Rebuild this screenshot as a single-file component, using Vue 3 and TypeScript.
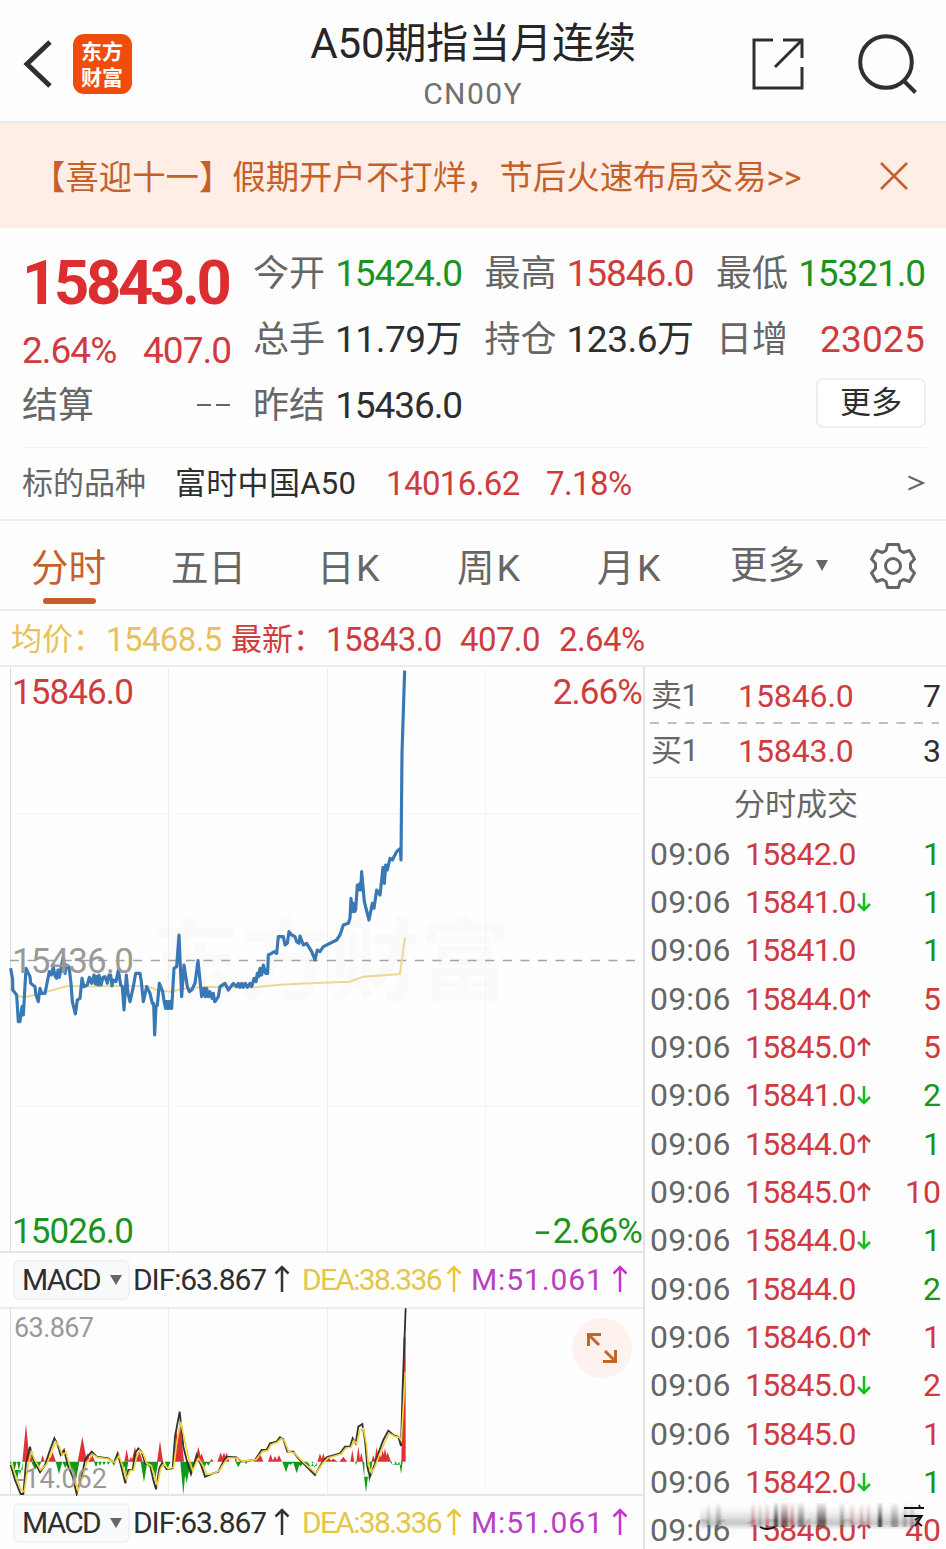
<script setup lang="ts">
type Tone = 'up' | 'down' | 'plain'

interface Cell { label: string; value: string; tone: Tone; fit?: string }
interface Tick { price: string; dir: '' | 'up' | 'down'; qty: number; tone: Tone }

const cells: Cell[] = [
  { label: '今开', value: '15424.0', tone: 'down' },
  { label: '最高', value: '15846.0', tone: 'up' },
  { label: '最低', value: '15321.0', tone: 'down' },
  { label: '总手', value: '11.79万', tone: 'plain', fit: 'loose' },
  { label: '持仓', value: '123.6万', tone: 'plain', fit: 'loose' },
  { label: '日增', value: '23025', tone: 'up', fit: 'looser' },
  { label: '昨结', value: '15436.0', tone: 'plain' },
]

const tabs = ['分时', '五日', '日K', '周K', '月K']

const t = (price: string, dir: Tick['dir'], qty: number, tone: Tone): Tick => ({ price, dir, qty, tone })
const ticks: Tick[] = [
  t('15842.0', '', 1, 'down'),
  t('15841.0', 'down', 1, 'down'),
  t('15841.0', '', 1, 'down'),
  t('15844.0', 'up', 5, 'up'),
  t('15845.0', 'up', 5, 'up'),
  t('15841.0', 'down', 2, 'down'),
  t('15844.0', 'up', 1, 'down'),
  t('15845.0', 'up', 10, 'up'),
  t('15844.0', 'down', 1, 'down'),
  t('15844.0', '', 2, 'down'),
  t('15846.0', 'up', 1, 'up'),
  t('15845.0', 'down', 2, 'up'),
  t('15845.0', '', 1, 'up'),
  t('15842.0', 'down', 1, 'down'),
  t('15846.0', 'up', 40, 'up'),
]

// Series are stored at three units per pixel.
const price =
  '32,385 38,420 38,450 50,465 55,545 60,545 66,500 70,525 78,385 90,410 92,430 105,440 108,465 115,485 120,445 125,460 135,460 142,425 148,395 154,405 160,380 165,408 170,415 174,390 178,412 184,380 190,350 195,400 200,375 207,380 213,430 217,485 226,522 232,480 240,475 246,415 252,440 262,435 268,412 275,430 282,405 286,432 290,410 294,435 297,405 303,435 309,412 315,410 322,430 327,405 332,405 336,438 340,420 348,425 355,390 362,435 367,440 372,510 379,405 384,460 390,485 400,440 407,400 420,400 424,425 430,485 440,440 450,460 457,490 461,490 464,585 468,500 472,495 478,430 488,455 492,482 497,505 500,485 503,505 506,485 509,505 512,485 515,505 522,385 530,380 537,285 545,470 552,375 562,440 568,455 575,450 585,430 594,362 605,470 612,445 616,470 620,445 625,470 630,455 636,475 640,460 644,485 ' +
  '607,470 612,450 617,480 622,460 626,475 630,445 645,485 655,470 660,440 675,430 685,450 700,430 710,440 715,430 720,442 725,430 730,442 736,430 742,442 750,430 755,440 758,430 762,415 768,425 772,400 776,410 780,385 785,405 790,375 797,400 803,400 805,345 815,340 822,335 830,340 835,290 850,290 855,315 862,310 867,275 875,285 885,290 890,305 897,310 900,288 910,315 920,310 935,335 945,360 952,330 960,335 970,320 1010,300 1020,285 1030,255 1045,250 1050,235 1053,175 1057,215 1060,190 1063,215 1067,210 1072,135 1076,150 1080,130 1082,150 1085,95 1093,185 1107,240 1117,190 1122,205 1130,150 1140,165 1149,82 1153,130 1157,75 1162,90 1170,55 1177,60 1190,35 1201,25 1203,60 1206,-260 1214,-508'
    .replace('607,470 612,450 617,480 622,460 626,475 630,445 ', '')

const average =
  '32,420 50,468 75,472 130,458 205,437 250,440 320,438 440,438 470,450 510,455 560,445 620,440 765,442 840,434 930,430 1050,425 1090,410 1200,402 1215,292'

const dif =
  '32,735 45,780 62,822 70,822 78,730 90,680 100,720 120,757 135,735 150,690 163,655 172,672 182,705 192,690 205,740 218,770 230,822 245,770 255,720 275,695 290,710 305,712 325,715 342,728 353,700 365,745 376,790 385,750 398,750 405,700 415,685 425,695 435,730 450,735 460,780 468,808 478,745 487,728 500,748 518,745 525,650 539,575 550,680 560,720 573,762 590,705 605,740 615,770 640,760 655,755 670,725 680,710 710,712 725,725 765,720 785,690 800,690 810,670 830,665 840,652 850,658 862,695 880,695 895,715 915,735 945,765 965,730 980,712 1020,700 1035,680 1050,680 1058,655 1067,670 1075,620 1087,612 1095,660 1102,740 1110,770 1120,745 1135,700 1150,660 1165,632 1180,645 1195,650 1203,678 1208,500 1217,265'
const dea =
  '34,730 48,770 64,812 73,815 84,735 94,695 104,720 122,750 140,733 154,697 166,665 177,678 187,705 198,697 210,740 223,768 234,812 248,772 260,728 278,703 292,712 325,717 344,728 357,707 370,745 379,778 390,752 401,750 410,710 419,691 429,700 440,730 454,737 464,772 472,795 482,745 491,732 504,746 521,742 530,670 542,605 556,670 566,715 578,752 595,715 610,738 620,764 642,760 658,752 674,727 684,714 712,714 728,724 768,719 788,694 803,692 813,674 832,667 843,656 853,662 866,695 883,699 899,716 919,735 948,760 968,730 984,714 1023,702 1038,684 1053,682 1062,662 1070,672 1079,632 1090,625 1099,670 1105,735 1114,758 1124,742 1139,702 1154,667 1168,640 1183,649 1198,652 1204,662 1210,560 1216,455'

type Spike = [x: number, half: number, y: number]
const rise: Spike[] = [
  [78, 11, 612], [88, 10, 680], [128, 6, 705], [146, 10, 700], [158, 10, 697], [247, 14, 650], [262, 10, 700], [275, 10, 700],
  [380, 7, 688], [393, 7, 710], [405, 10, 680], [418, 10, 692], [480, 9, 662], [530, 10, 630], [539, 13, 600], [595, 11, 680],
  [605, 8, 700], [635, 6, 716], [662, 10, 697], [672, 10, 697], [680, 8, 697], [707, 3, 705], [770, 9, 712], [780, 10, 700],
  [812, 8, 702], [825, 8, 708], [837, 9, 705], [960, 8, 700], [970, 8, 700], [985, 8, 704], [1000, 14, 716], [1030, 12, 710],
  [1057, 6, 690], [1075, 6, 678], [1084, 6, 697], [1120, 6, 705], [1130, 7, 680], [1138, 8, 695], [1148, 8, 690], [1155, 8, 684],
  [1163, 10, 697],
]
const fall: Spike[] = [
  [40, 10, 765], [50, 12, 785], [60, 9, 765], [105, 11, 750], [115, 9, 745], [177, 10, 762], [196, 9, 745], [213, 11, 760],
  [226, 12, 790], [288, 6, 742], [300, 5, 738], [312, 5, 736], [325, 5, 734], [342, 6, 737], [368, 9, 755], [378, 7, 765],
  [432, 10, 787], [446, 9, 740], [458, 10, 760], [466, 9, 775], [503, 9, 745], [550, 9, 824], [560, 12, 790], [572, 11, 760],
  [612, 9, 745], [625, 7, 737], [715, 8, 742], [738, 5, 732], [858, 11, 757], [872, 9, 735], [890, 11, 760], [902, 9, 740],
  [918, 7, 740], [932, 9, 740], [943, 8, 742], [1068, 3, 735], [1098, 11, 818], [1108, 9, 790], [1180, 10, 736], [1192, 10, 732],
  [1203, 5, 762],
]
const area = (list: Spike[]) => list.map(([x, h, y]) => `M${x - h} 725L${x} ${y}L${x + h} 725Z`).join('')
const risePath = area(rise) + 'M1204 725L1211 350H1217V725Z'
const fallPath = area(fall) + 'M34 725H68V750H34ZM922 725H950V738H922ZM1093 725H1110V770H1093ZM1176 725H1203V734H1176Z'

// Streaks: [offset, width, opacity, color]
const streaks: [number, number, number, string][] = [
  [9, 3, .35, '#555'], [18, 5, .45, '#555'], [53, 4, .45, '#a33'], [60, 4, .3, '#555'], [67, 4, .35, '#a33'], [76, 4, .9, '#333'],
  [83, 7, .75, '#633'], [92, 4, .55, '#a33'], [100, 6, .65, '#555'], [119, 9, .8, '#544'], [142, 4, .55, '#555'], [152, 4, .3, '#a33'],
  [162, 3, .4, '#a33'], [169, 3, .4, '#a33'], [180, 4, .9, '#333'], [193, 7, .5, '#555'], [205, 4, .35, '#555'], [212, 4, .4, '#555'],
]
</script>

<template>
  <main class="app">
    <header class="head">
      <svg class="back" viewBox="0 0 30 50"><path d="M27 3 4 25 27 47" /></svg>
      <div class="logo">东方财富</div>
      <div class="title">
        <h1>A50期指当月连续</h1>
        <p>CN00Y</p>
      </div>
      <svg class="share" viewBox="0 0 52 52"><path d="M21 2H2V50H50V29M50 20V2H31M23 29 49 3" /></svg>
      <svg class="search" viewBox="0 0 62 62"><circle cx="29" cy="29" r="25.8" /><path d="M47 48 58.500 59.500" /></svg>
    </header>

    <div class="banner">
      <span>【喜迎十一】假期开户不打烊，节后火速布局交易&gt;&gt;</span>
      <svg viewBox="0 0 30 30"><path d="M2 2 28 28M28 2 2 28" /></svg>
    </div>

    <section class="quote">
      <div class="last">
        <strong>15843.0</strong>
        <div class="pair up"><span>2.64%</span><span>407.0</span></div>
        <div class="pair settle"><span>结算</span><span class="dashes"><i /><i /></span></div>
      </div>
      <div class="cells">
        <div v-for="c in cells" :key="c.label" class="cell">
          <span class="label">{{ c.label }}</span><span :class="['num', c.tone, c.fit]">{{ c.value }}</span>
        </div>
        <span class="spacer" />
        <button class="more">更多</button>
      </div>
    </section>

    <div class="under">
      <span class="u-label">标的品种</span><span class="u-name">富时中国A50</span>
      <span class="u-num">14016.62</span><span class="u-pct">7.18%</span>
      <svg viewBox="0 0 18 16"><path d="M1.500 1.500 16 8 1.500 14.500" /></svg>
    </div>

    <nav class="tabs">
      <span v-for="(n, i) in tabs" :key="n" :class="['tab', { on: i === 0 }]">{{ n }}</span>
      <span class="tab drop">更多<i class="tri" /></span>
      <svg class="gear" viewBox="-24 -24 48 48">
        <path d="M-5.500-21.500H5.500L7-15.500 10.500-13.500 16.500-15.500 21.500-7 17.500-2.500V2.500L21.500 7 16.500 15.500 10.500 13.500 7 15.500 5.500 21.500H-5.500L-7 15.500-10.500 13.500-16.500 15.500-21.500 7-17.500 2.500V-2.500L-21.500-7-16.500-15.500-10.500-13.500-7-15.500Z" />
        <circle r="7.500" />
      </svg>
    </nav>

    <div class="legend">
      <span class="avg l1">均价：</span><span class="avg l2">15468.5</span>
      <span class="l3">最新：</span><span class="l4">15843.0</span><span class="l5">407.0</span><span class="l6">2.64%</span>
    </div>

    <div class="body">
      <section class="charts">
        <div class="plot">
          <svg class="canvas" viewBox="0 0 644 584">
            <text class="mark" x="150" y="326" textLength="360">东方财富</text>
            <path class="grid" d="M168.500 1V584M327.500 1V584" />
            <path class="grid faint" d="M485.500 1V584M11 146.500H643M11 439.500H643" />
            <path class="frame" d="M10.500 0V584" />
            <path class="mid" d="M10 293.500H643" />
            <g transform="translate(0 173) scale(.33333)">
              <polyline class="average" :points="average" />
              <polyline class="price" :points="price" />
            </g>
          </svg>
          <span class="tag tl up">15846.0</span><span class="tag tr up">2.66%</span>
          <span class="tag ml">15436.0</span>
          <span class="tag bl down">15026.0</span><span class="tag br down"><i class="minus">-</i>2.66%</span>
        </div>

        <template v-for="row in 2" :key="row">
          <div class="macd">
            <span class="pick">MACD<i class="tri" /></span>
            <span class="m1">DIF:63.867</span><svg viewBox="0 0 16 28"><path d="M8 27V2M1.500 8.500 8 2 14.500 8.500" /></svg>
            <span class="m2">DEA:38.336</span><svg class="y" viewBox="0 0 16 28"><path d="M8 27V2M1.500 8.500 8 2 14.500 8.500" /></svg>
            <span class="m3">M:51.061</span><svg class="p" viewBox="0 0 16 28"><path d="M8 27V2M1.500 8.500 8 2 14.500 8.500" /></svg>
          </div>
          <div v-if="row === 1" class="sub">
            <svg class="canvas" viewBox="0 0 644 188">
              <path class="grid" d="M168.500 1V187M327.500 1V187" />
              <path class="grid faint" d="M485.500 1V187" />
              <path class="frame" d="M10.500 0V187" />
              <g transform="translate(0 -88) scale(.33333)">
                <path class="rise" :d="risePath" /><path class="fall" :d="fallPath" />
                <polyline class="dif" :points="dif" />
                <polyline class="dea" :points="dea" />
              </g>
            </svg>
            <span class="small top">63.867</span><span class="small bottom">-14.062</span>
            <span class="expand"><svg viewBox="0 0 30 30"><path d="M1.500 13V1.500H14M2 2 12 12M28.500 17V28.500H16M28 28 18 18" /></svg></span>
          </div>
        </template>
      </section>

      <aside class="book">
        <div class="ask"><span>卖1</span><b>15846.0</b><em>7</em></div>
        <svg class="rule" viewBox="0 0 301 2"><path d="M5 1H294" /></svg>
        <div class="ask"><span>买1</span><b>15843.0</b><em>3</em></div>
        <h2>分时成交</h2>
        <div v-for="(k, i) in ticks" :key="i" class="tick">
          <span class="time">09:06</span><span class="tp">{{ k.price }}</span>
          <svg :class="k.dir" viewBox="0 0 14 20"><path v-if="k.dir" d="M7 1V18M1 12 7 18 13 12" /></svg>
          <em :class="k.tone">{{ k.qty }}</em>
        </div>
      </aside>
    </div>

    <svg class="smear" viewBox="0 0 232 34">
      <defs>
        <linearGradient id="fade" x1="0" y1="0" x2="0" y2="1">
          <stop offset="0" stop-color="#fefefe" /><stop offset="1" stop-color="#fefefe" stop-opacity="0" />
        </linearGradient>
        <linearGradient id="band" x1="0" y1="0" x2="0" y2="1">
          <stop offset="0" stop-color="#777" stop-opacity="0" /><stop offset=".75" stop-color="#777" stop-opacity=".4" /><stop offset="1" stop-color="#777" stop-opacity="0" />
        </linearGradient>
        <filter id="soft" x="-5%" y="-20%" width="110%" height="140%"><feGaussianBlur stdDeviation="1.300 .6" /></filter>
      </defs>
      <rect x="2" y="10" width="216" height="14" fill="#fefefe" opacity=".8" />
      <g filter="url(#soft)">
        <rect x="2" y="3" width="220" height="26" fill="url(#band)" />
        <rect v-for="s in streaks" :key="s[0]" :x="s[0]" y="2" :width="s[1]" height="24" :fill="s[3]" :opacity="s[2]" />
      </g>
      <rect x="0" y="0" width="222" height="20" fill="url(#fade)" />
      <path class="ink" d="M62 26Q69 30 77 26" />
      <path class="ink" d="M206 7H226M221 4 222 6M206 15H223L217 19M224 15 217 25M219 21 224 25" />
    </svg>
  </main>
</template>

<style>
html, body { margin: 0; background: #fff; }
</style>

<style scoped>
.app {
  position: relative; width: 946px; height: 1549px; overflow: hidden; background: #fefefe; color: #2e2e2e;
  font-family: Roboto, "Noto Sans CJK SC", sans-serif; font-size: 36px; white-space: nowrap;
}
.app * { box-sizing: border-box; }
svg { display: block; fill: none; flex: none; }
i, em { font-style: normal; }
.up { color: #cf3b3e; }
.down { color: #1b931f; }
.plain { color: #2e2e2e; }

.head { display: flex; height: 123px; border-bottom: 2px solid #ececec; }
.back { width: 30px; height: 50px; margin: 39px 0 0 23px; stroke: #303030; stroke-width: 5; }
.logo {
  width: 59px; height: 60px; margin: 34px 0 0 20px; padding: 4px 8px 0; border-radius: 11px; background: #f04c0c;
  color: #fff; font: 700 21px/25.500px "Noto Sans CJK SC", sans-serif; white-space: normal; word-break: break-all; flex: none;
}
.title { width: 440px; margin-left: 121px; text-align: center; flex: none; }
h1 { margin: 15px 0 0; font-size: 42px; font-weight: 400; line-height: 58px; letter-spacing: -.1px; color: #262626; }
p { margin: 3px 0 0; font-size: 30px; line-height: 36px; letter-spacing: 1.400px; color: #707070; }
.share { width: 52px; height: 52px; margin: 38px 0 0 59px; stroke: #303030; stroke-width: 3; }
.search { width: 62px; height: 62px; margin: 33px 0 0 53px; stroke: #303030; stroke-width: 4; }

.banner { display: flex; height: 105px; padding-left: 32px; background: #feeee5; color: #c6602a; font-size: 33.400px; line-height: 109px; }
.banner span { width: 847px; }
.banner svg { width: 30px; height: 30px; margin-top: 38px; stroke: #c6602a; stroke-width: 2.500; }

.quote { display: flex; height: 219px; padding-top: 12px; }
.last { width: 231px; margin-left: 22px; flex: none; }
.last strong { display: block; height: 86px; font-size: 61.500px; line-height: 86px; letter-spacing: -3.300px; color: #dc2d30; font-weight: 700; }
.pair { display: flex; justify-content: space-between; width: 209px; height: 48px; line-height: 49px; font-size: 37px; letter-spacing: -1px; }
.settle { height: 62px; line-height: 64px; color: #666; font-size: 36px; letter-spacing: 0; }
.dashes { display: flex; gap: 5px; align-items: center; padding-right: 1px; }
.dashes i { width: 14px; height: 2.500px; background: #666; }
.cells { display: grid; grid-template-columns: 231.500px 231.500px 209px; grid-auto-rows: 66px; line-height: 68px; align-content: start; }
.cell { display: flex; }
.label { color: #666; width: 72px; }
.num { width: 137px; text-align: right; font-size: 37px; letter-spacing: -1.100px; }
.num.loose { letter-spacing: -.5px; }
.num.looser { letter-spacing: .2px; }
.more {
  width: 110px; height: 50px; margin: 6px 0 0 100px; padding: 0; border: 2px solid #eee; border-radius: 7px; background: #fff;
  font: 31px/44px Roboto, "Noto Sans CJK SC", sans-serif; color: #2e2e2e;
}

.under { display: flex; height: 72px; margin: 0 20px 0 22px; border-top: 1px solid #f3f3f3; font-size: 31px; line-height: 71px; }
.u-label { width: 153px; color: #666; }
.u-name { width: 211px; letter-spacing: .3px; }
.u-num, .u-pct { font-size: 33px; letter-spacing: -.6px; color: #cf3b3e; }
.u-num { width: 160px; }
.u-pct { width: 361px; }
.under svg { width: 18px; height: 16px; margin-top: 27px; stroke: #666; stroke-width: 2; }

.tabs { display: flex; height: 92px; border-top: 2px solid #eee; border-bottom: 2px solid #eee; color: #666; font-size: 37.500px; line-height: 94px; }
.tab { position: relative; width: 142px; padding-left: 31px; }
.tab:nth-child(2) { width: 146px; padding-left: 29px; }
.tab:nth-child(3) { width: 140px; padding-left: 29px; letter-spacing: 1.500px; }
.tab:nth-child(4) { width: 140px; padding-left: 29px; letter-spacing: 2px; }
.tab:nth-child(5) { width: 140px; padding-left: 29px; letter-spacing: 2.500px; }
.on { color: #c6602a; }
.on::after { content: ""; position: absolute; left: 43px; top: 77px; width: 53px; height: 6px; border-radius: 3px; background: #c6602a; }
.drop { display: flex; align-items: center; width: 161px; padding-left: 22px; }
.tri { width: 0; height: 0; border: 6px solid transparent; border-top: 11px solid #666; border-bottom: 0; }
.drop .tri { margin-left: 11px; }
.gear { width: 48px; height: 48px; margin-top: 21px; stroke: #666; stroke-width: 3; stroke-linejoin: round; }

.legend { display: flex; height: 54px; line-height: 57px; padding-left: 11px; font-size: 31px; color: #cf3b3e; }
.legend .avg { color: #e6c258; }
.l2, .l4, .l5, .l6 { font-size: 33px; letter-spacing: -.6px; }
.l1 { width: 95px; } .l2 { width: 125px; } .l3 { width: 95px; } .l4 { width: 134px; } .l5 { width: 99px; }

.body { display: flex; height: 884px; border-top: 2px solid #eee; }
.charts { width: 645px; border-right: 2px solid #e2e2e2; flex: none; }
.plot { position: relative; height: 584px; }
.canvas { width: 644px; height: 100%; }
.mark { font: 700 90px "Noto Sans CJK SC", sans-serif; fill: #fafafa; }
.grid { stroke: #ededed; }
.faint { stroke: #f5f5f5; }
.frame { stroke: #ddd; }
.mid { stroke: #a2a2a2; stroke-width: 1.500; stroke-dasharray: 9 8.600; }
.average { stroke: #f0d694; stroke-width: 6; }
.price { stroke: #3878b4; stroke-width: 9.500; stroke-linejoin: round; }
.tag { position: absolute; font-size: 35px; line-height: 40px; letter-spacing: -.9px; }
.tl { left: 12px; top: 6px; } .tr { right: 1px; top: 6px; }
.ml { left: 12px; top: 275px; color: #999; }
.bl { left: 12px; bottom: -1px; } .br { right: 1px; bottom: -1px; }
.minus { display: inline-block; margin-right: 4px; transform: scaleX(1.600); transform-origin: right; }

.macd { display: flex; height: 56px; border-top: 2px solid #e6e6e6; padding-left: 13px; font-size: 30px; line-height: 54px; }
.pick { display: flex; align-items: center; width: 117px; height: 40px; margin: 7px 3px 0 0; padding-left: 7px; border: 2px solid #f1f2f3; border-radius: 6px; background: #f9fafb; letter-spacing: -1.800px; }
.pick .tri { margin-left: 10px; border-top-width: 10px; }
.macd svg { width: 16px; height: 28px; margin-top: 12px; stroke: #333; stroke-width: 2.500; }
.macd .y { stroke: #e8c832; } .macd .p { stroke: #c832c8; }
.m1 { width: 141px; letter-spacing: -1.100px; }
.m2 { width: 144px; margin-left: 12px; color: #e3c64a; letter-spacing: -1.700px; }
.m3 { width: 141px; margin-left: 9px; color: #b83fbf; letter-spacing: .9px; }
.sub { position: relative; height: 187px; border-top: 2px solid #eee; }
.sub .canvas { height: 188px; margin-top: -1px; }
.rise { fill: #df3236; } .fall { fill: #0e9a16; }
.dif { stroke: #333; stroke-width: 5.500; }
.dea { stroke: #f0d23c; stroke-width: 5; }
.small { position: absolute; font-size: 27px; line-height: 32px; color: #999; letter-spacing: -.6px; }
.small.top { left: 14px; top: 3px; } .small.bottom { left: 17px; bottom: -1px; letter-spacing: -.1px; }
.expand { position: absolute; left: 572px; top: 9px; width: 60px; height: 60px; padding: 15px; border-radius: 50%; background: #fdf2ed; }
.expand svg { width: 30px; height: 30px; stroke: #c6642a; stroke-width: 3; }

.book { width: 301px; flex: none; }
.ask { display: flex; height: 55px; padding: 0 5px 0 6px; font-size: 32px; line-height: 58px; }
.ask span { width: 87px; font-size: 31px; color: #666; letter-spacing: -.6px; }
.ask b { flex: 1; font-weight: 400; color: #cf3b3e; letter-spacing: -.1px; }
.rule { width: 301px; height: 2px; margin-bottom: -2px; stroke: #aaa; stroke-width: 1.500; stroke-dasharray: 9 8.600; }
h2 { margin: 0; height: 52.500px; border-top: 1px solid #f3f3f3; padding-left: 89px; color: #666; font-size: 31px; font-weight: 400; line-height: 53px; }
.tick { display: flex; height: 48.350px; padding: 0 5px 0 5px; line-height: 49px; font-size: 32px; }
.time { width: 95px; color: #666; letter-spacing: .2px; }
.tp { width: 112px; color: #cf3b3e; letter-spacing: -.8px; }
.tick svg { width: 14px; height: 20px; margin-top: 14px; stroke-width: 2.500; }
.tick svg.up { stroke: #cf3b3e; transform: rotate(180deg); }
.tick svg.down { stroke: #14c01c; }
.tick em { margin-left: auto; }

.smear { position: absolute; left: 698px; top: 1501px; width: 232px; height: 34px; }
.ink { stroke: #111; stroke-width: 1.800; }
</style>
